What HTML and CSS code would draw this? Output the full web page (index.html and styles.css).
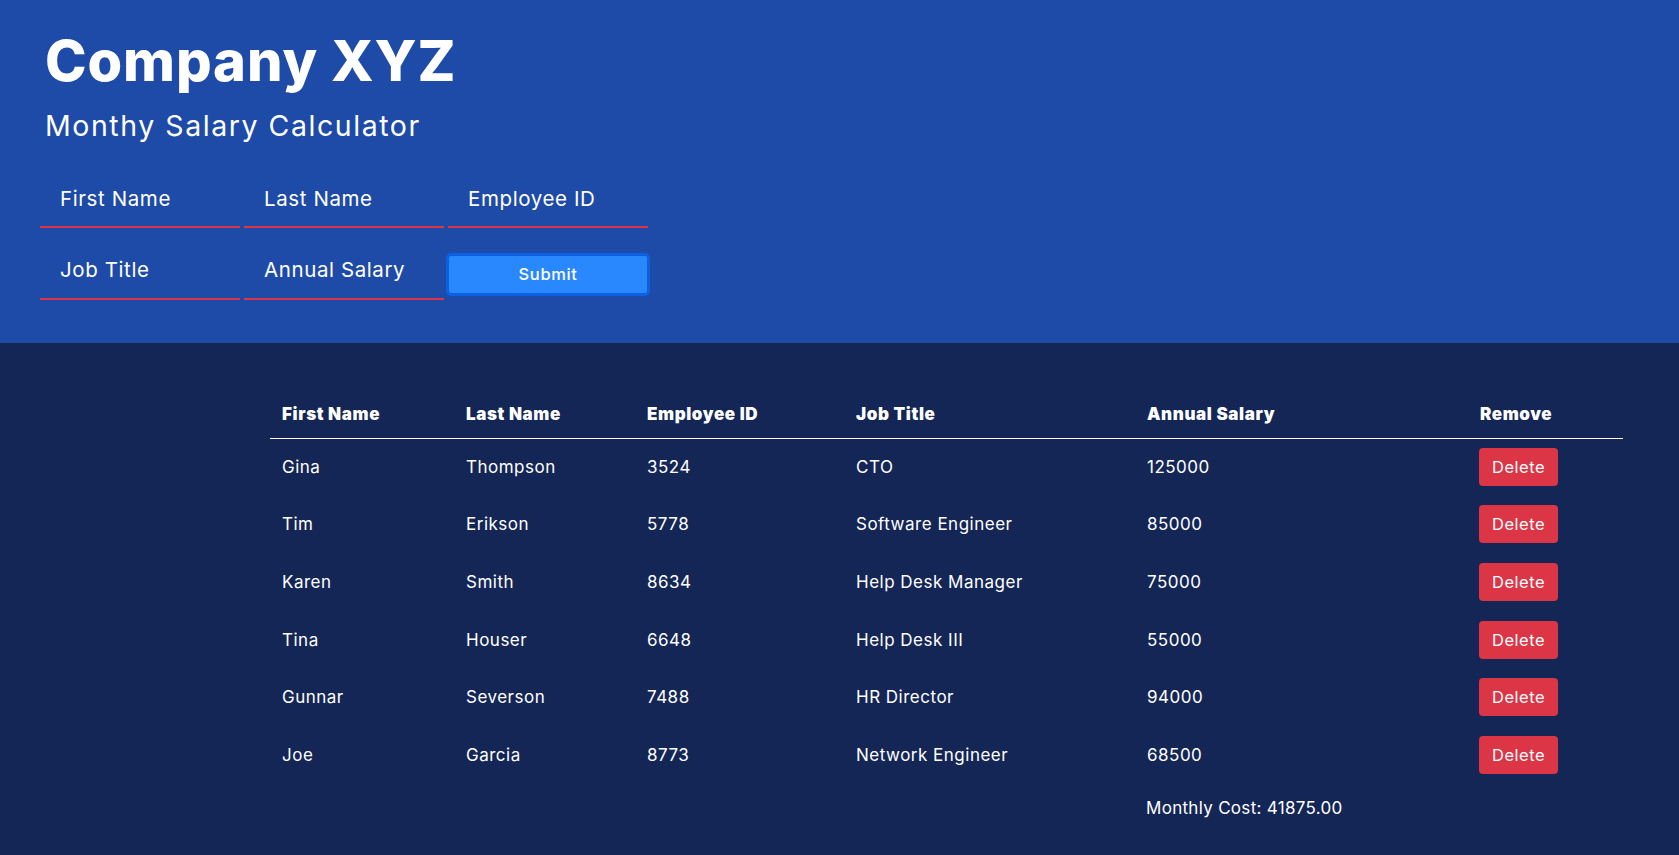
FILE: index.html
```html
<!DOCTYPE html>
<html lang="en">
<head>
<meta charset="utf-8">
<title>Company XYZ - Monthy Salary Calculator</title>
<link rel="stylesheet" href="styles.css">
</head>
<body>
<header class="hero">
  <h1 class="title">Company XYZ</h1>
  <h2 class="subtitle">Monthy Salary Calculator</h2>
  <form class="entry">
    <input class="field" type="text" placeholder="First Name">
    <input class="field" type="text" placeholder="Last Name">
    <input class="field" type="text" placeholder="Employee ID">
    <input class="field" type="text" placeholder="Job Title">
    <input class="field" type="text" placeholder="Annual Salary">
    <button class="submit" type="button">Submit</button>
  </form>
</header>
<main class="roster">
  <table class="staff">
    <colgroup>
      <col class="c-first"><col class="c-last"><col class="c-id"><col class="c-title"><col class="c-salary"><col class="c-remove">
    </colgroup>
    <thead>
      <tr><th>First Name</th><th>Last Name</th><th>Employee ID</th><th>Job Title</th><th>Annual Salary</th><th>Remove</th></tr>
    </thead>
    <tbody>
      <tr><td>Gina</td><td>Thompson</td><td>3524</td><td>CTO</td><td>125000</td><td><button class="delete" type="button">Delete</button></td></tr>
      <tr><td>Tim</td><td>Erikson</td><td>5778</td><td>Software Engineer</td><td>85000</td><td><button class="delete" type="button">Delete</button></td></tr>
      <tr><td>Karen</td><td>Smith</td><td>8634</td><td>Help Desk Manager</td><td>75000</td><td><button class="delete" type="button">Delete</button></td></tr>
      <tr><td>Tina</td><td>Houser</td><td>6648</td><td>Help Desk III</td><td>55000</td><td><button class="delete" type="button">Delete</button></td></tr>
      <tr><td>Gunnar</td><td>Severson</td><td>7488</td><td>HR Director</td><td>94000</td><td><button class="delete" type="button">Delete</button></td></tr>
      <tr><td>Joe</td><td>Garcia</td><td>8773</td><td>Network Engineer</td><td>68500</td><td><button class="delete" type="button">Delete</button></td></tr>
    </tbody>
    <tfoot>
      <tr><td></td><td></td><td></td><td></td><td class="total" colspan="2">Monthly Cost: 41875.00</td></tr>
    </tfoot>
  </table>
</main>
</body>
</html>
```

FILE: styles.css
```css
* { box-sizing: border-box; }

html, body {
  margin: 0;
  padding: 0;
}

body {
  min-height: 100vh;
  background: #142656;
  color: #ffffff;
  font-family: "Inter", "Liberation Sans", sans-serif;
}

.hero {
  background: #1e4aa8;
  padding: 28px 40px 43px 40px;
}

.title {
  margin: 0 0 0 5px;
  font-size: 56px;
  line-height: 1.2;
  font-weight: 800;
  letter-spacing: 0.9px;
}

.subtitle {
  margin: 14px 0 0 5px;
  font-size: 28.5px;
  line-height: 1.2;
  font-weight: 400;
  letter-spacing: 1.55px;
}

.entry {
  margin-top: 27px;
  display: grid;
  grid-template-columns: repeat(3, 200px);
  column-gap: 4px;
  row-gap: 13.5px;
}

.field {
  width: 200px;
  height: 58px;
  padding: 0 20px;
  background: transparent;
  border: none;
  border-bottom: 2px solid #dc3545;
  color: #ffffff;
  font-family: "Inter", "Liberation Sans", sans-serif;
  font-size: 20.5px;
  letter-spacing: 0.6px;
  outline: none;
}

.field::placeholder {
  color: #ffffff;
  opacity: 1;
}

.submit {
  align-self: start;
  width: 204px;
  height: 43px;
  margin: 11px 0 0 -2px;
  background: #2a88ff;
  border: 3px solid #0d60e0;
  border-radius: 5px;
  color: #ffffff;
  font-family: "Inter", "Liberation Sans", sans-serif;
  font-size: 16.5px;
  font-weight: 500;
  letter-spacing: 0.6px;
}

.roster {
  padding: 47px 56px 20px 270px;
}

.staff {
  width: 100%;
  border-collapse: collapse;
  table-layout: fixed;
}

.c-first { width: 184px; }
.c-last { width: 181px; }
.c-id { width: 209px; }
.c-title { width: 291px; }
.c-salary { width: 333px; }
.c-remove { width: 155px; }

.staff th {
  text-align: left;
  padding: 12px;
  line-height: 24px;
  font-size: 17px;
  font-weight: 900;
  letter-spacing: 0.6px;
  border-bottom: 1px solid #ffffff;
}

.staff td {
  height: 57.8px;
  padding: 0 12px;
  vertical-align: middle;
  font-size: 17px;
  line-height: 24px;
  letter-spacing: 0.5px;
}

.staff tbody td {
  padding-top: 0;
  padding-bottom: 2px;
}

.staff td:last-child {
  padding-left: 11px;
}

.staff tfoot td {
  height: auto;
  padding: 11px 12px 12px;
}

.staff .total {
  letter-spacing: 0.3px;
}

.delete {
  width: 79px;
  height: 38px;
  padding: 0;
  background: #dc3545;
  border: none;
  border-radius: 4px;
  color: #ffffff;
  font-family: "Inter", "Liberation Sans", sans-serif;
  font-size: 16.5px;
  letter-spacing: 0.5px;
}
```
